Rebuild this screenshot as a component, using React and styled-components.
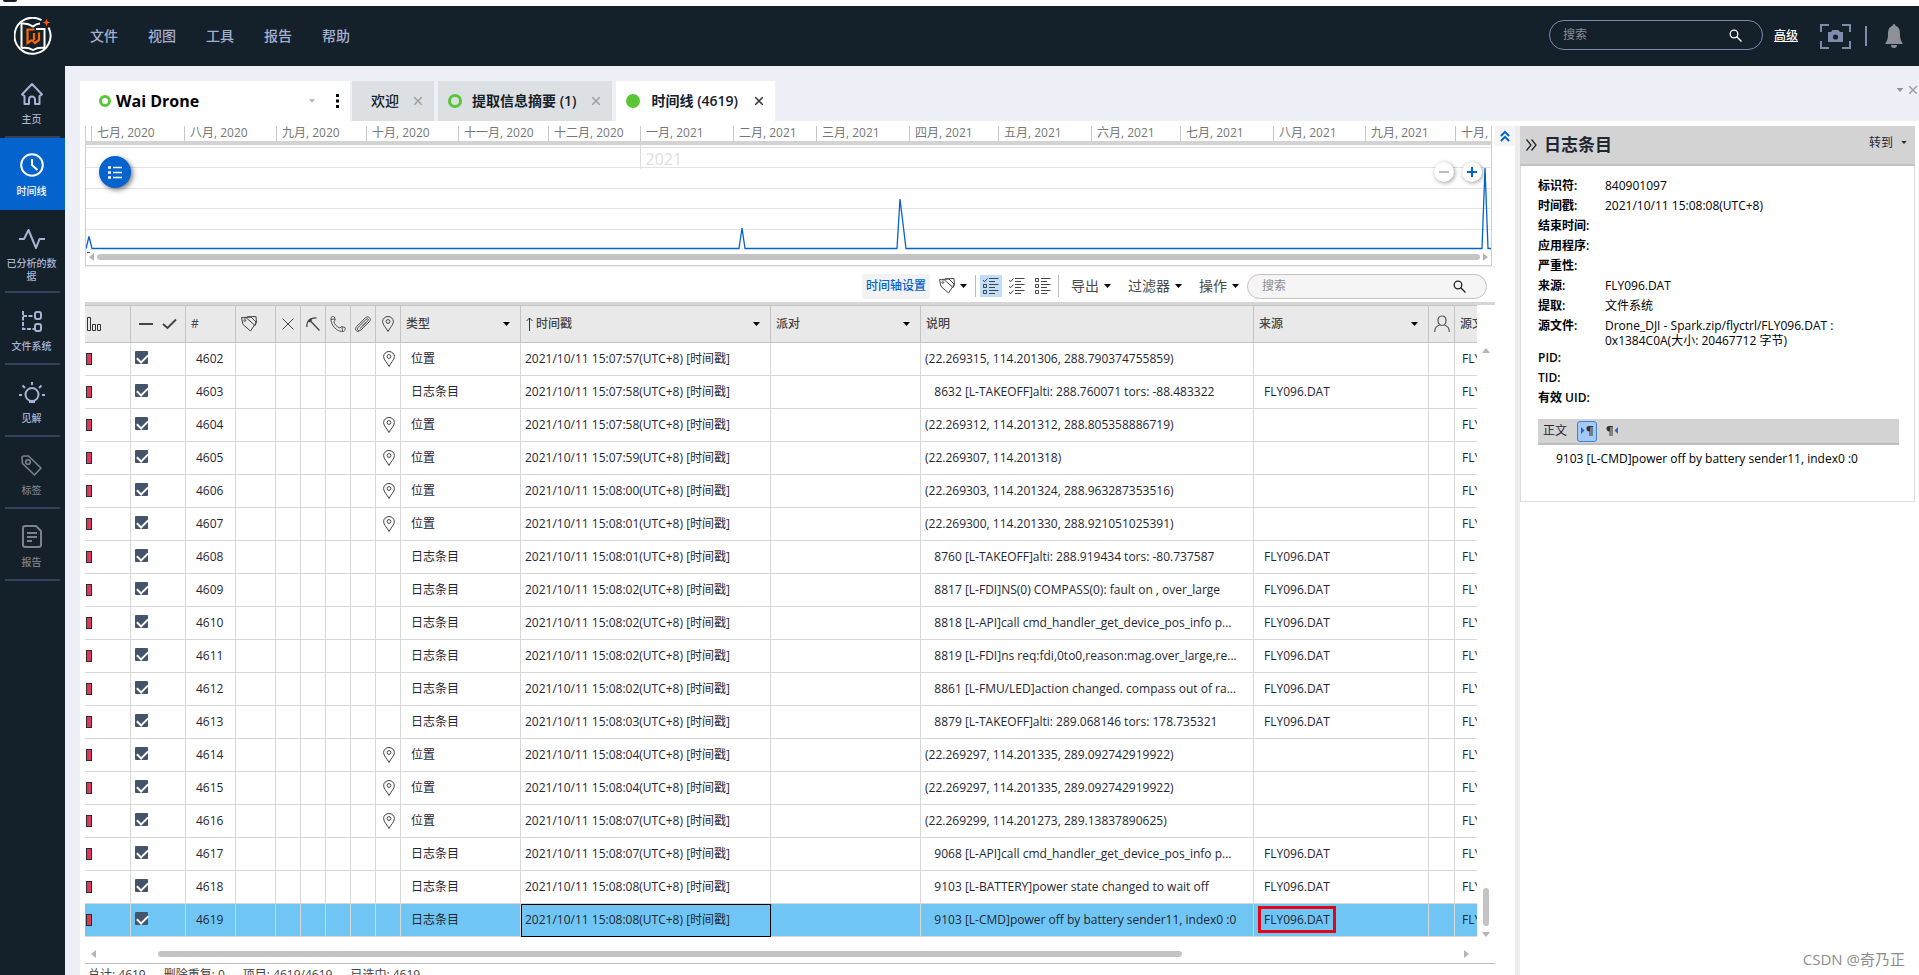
import React from 'react'
import styled, { createGlobalStyle } from 'styled-components'

const GlobalStyle = createGlobalStyle`
    * {
        box-sizing: border-box;
    }
    body {
        margin: 0;
        overflow: hidden;
        background: white;
        color: #1f2733;
        font-family: 'Open Sans', 'Noto Sans CJK SC', sans-serif;
        font-size: 12px;
        line-height: 16px;
    }
    button, input {
        font: inherit;
        color: inherit;
    }
    button {
        padding: 0;
        border: 0;
        background: none;
    }
    svg {
        display: block;
        flex: none;
    }
`

const Shell = styled.div`
    position: relative;
    display: flex;
    flex-direction: column;
    height: 100vh;
    overflow: hidden;
`

const TitleStrip = styled.div`
    flex: none;
    height: 6px;
    padding-left: 3px;
`

const TitleMark = styled.div`
    width: 14px;
    height: 2px;
    border-radius: 0 0 4px 4px;
    background: #14202a;
`

const Header = styled.header`
    flex: none;
    display: flex;
    align-items: center;
    height: 60px;
    padding: 0 16px 0 14px;
    background: #14202a;
    color: #a4aed0;
`

const Menu = styled.nav`
    display: flex;
    flex: 1;
    gap: 30px;
    margin-left: 38px;
`

const MenuItem = styled.button`
    font-size: 14px;
    font-weight: 500;
`

const GlobalSearch = styled.label`
    display: flex;
    align-items: center;
    width: 214px;
    height: 30px;
    margin-top: -2px;
    padding: 0 20px 0 13px;
    border: 1px solid #7f8bad;
    border-radius: 15px;
    color: white;
`

const SearchInput = styled.input`
    flex: 1;
    min-width: 0;
    border: 0;
    outline: 0;
    padding: 0;
    background: none;
    &::placeholder {
        color: #8a8d92;
        opacity: 1;
    }
`

const AdvancedLink = styled.a`
    margin: 0 22px 0 11px;
    color: white;
    font-weight: 500;
    text-decoration: underline;
`

const HeaderDivider = styled.div`
    width: 2px;
    height: 20px;
    margin: 0 18px 0 14px;
    background: #7f8bad;
`

const Body = styled.div`
    display: flex;
    flex: 1;
    min-height: 0;
`

const Sidebar = styled.nav`
    flex: none;
    width: 65px;
    background: #14202a;
`

const SideItem = styled.button`
    display: flex;
    flex-direction: column;
    align-items: center;
    justify-content: flex-end;
    gap: 8px;
    width: 100%;
    height: ${p => (p.$tall ? 83 : 72)}px;
    padding: 0 6px ${p => (p.$tall ? 10 : 12)}px 4px;
    background: ${p => (p.$active ? '#0563ce' : 'linear-gradient(#31415f, #31415f) 5px 100% / 55px 2px no-repeat')};
    color: ${p => (p.$active ? 'white' : p.$dim ? '#7b818d' : '#a9b2d3')};
    font-size: 10px;
    font-weight: 500;
    line-height: 13px;
`

const Main = styled.main`
    display: flex;
    flex-direction: column;
    flex: 1;
    min-width: 0;
    padding: 15px 0 0 15px;
    background: #edf0f6;
`

const Tabs = styled.div`
    display: flex;
    flex: none;
    height: 40px;
`

const ProjectTab = styled.div`
    display: flex;
    align-items: center;
    width: 270px;
    margin-right: 2px;
    padding: 0 10px 0 19px;
    background: white;
    color: black;
    font-size: 16px;
    font-weight: 700;
`

const ProjectName = styled.span`
    flex: 1;
    margin-left: 5px;
`

const Tab = styled.div`
    display: flex;
    align-items: center;
    gap: ${p => (p.$active ? 12 : 10)}px;
    height: 40px;
    margin-right: 4px;
    padding: 0 12px 0 ${p => (p.$plain ? 19 : 10)}px;
    background: ${p => (p.$active ? 'white' : '#dde0e3')};
    color: #14202a;
    font-size: 14px;
    font-weight: ${p => (p.$plain ? 500 : 600)};
`

const TabTitle = styled.span`
    margin-right: 5px;
`

const Dot = styled.span`
    width: ${p => p.$size}px;
    height: ${p => p.$size}px;
    border: 3px solid #5bc538;
    border-radius: 50%;
    background: ${p => (p.$full ? '#5bc538' : 'none')};
`

const CloseButton = styled.button`
    color: ${p => (p.$active ? '#333333' : '#9b9fa3')};
`

const TabTools = styled.div`
    display: flex;
    align-items: center;
    gap: 5px;
    height: 18px;
    margin-left: auto;
    padding-right: 2px;
    color: #909499;
`

const Workspace = styled.div`
    display: flex;
    flex: 1;
    min-height: 0;
    padding: 5px 4px 0 5px;
    background: white;
`

const Evidence = styled.section`
    display: flex;
    flex-direction: column;
    flex: 1;
    min-width: 0;
`

const TimelineRow = styled.div`
    display: flex;
    height: 145px;
    border-bottom: 1px solid #ececec;
`

const Timeline = styled.div`
    display: flex;
    flex-direction: column;
    flex: 1;
    min-width: 0;
    height: 140px;
    margin-right: 3px;
    border: 1px solid #d0d0d0;
    border-top: 0;
`

const Ruler = styled.div`
    display: grid;
    grid-template-columns: ${p => p.$days.map(d => `minmax(0, ${d}fr)`).join(' ')};
    height: 19px;
    padding-left: 5px;
    border-bottom: 4px solid #d3d3d3;
`

const Month = styled.div`
    padding-left: 5px;
    border-left: 1px solid #c8c8c8;
    color: #777777;
    line-height: 14px;
    white-space: nowrap;
`

const ChartArea = styled.div`
    position: relative;
    height: 108px;
`

const YearLabel = styled.span`
    position: absolute;
    top: 0;
    left: 39.4%;
    height: 24px;
    padding: 6px 5px 0;
    border-left: 1px solid #dddddd;
    color: #dedede;
    font-size: 16px;
`

const LegendButton = styled.button`
    position: absolute;
    top: 11px;
    left: 13px;
    display: flex;
    align-items: center;
    justify-content: center;
    width: 32px;
    height: 32px;
    border-radius: 50%;
    background: #0563ce;
    color: white;
    box-shadow: 2px 2px 5px rgba(0, 0, 0, 0.5);
`

const ZoomButtons = styled.div`
    position: absolute;
    top: 17px;
    right: 9px;
    display: flex;
    gap: 8px;
`

const ZoomButton = styled.button`
    display: flex;
    align-items: center;
    justify-content: center;
    width: 20px;
    height: 20px;
    border-radius: 50%;
    background: white;
    color: ${p => (p.$off ? '#b9bec4' : '#0563ce')};
    box-shadow: 1px 1px 4px rgba(0, 0, 0, 0.4);
`

const ScrollTrack = styled.div`
    display: flex;
    align-items: center;
    gap: 3px;
    height: 8px;
    padding: 0 3px;
    color: #b5b5b5;
`

const ScrollThumb = styled.div`
    flex: 1;
    height: 6px;
    border-radius: 3px;
    background: #c4c4c4;
`

const CollapseButton = styled.button`
    display: flex;
    align-items: center;
    justify-content: center;
    width: 20px;
    height: 20px;
    margin-right: -20px;
    background: #f4f4f4;
    color: #0563ce;
`

const Toolbar = styled.div`
    display: flex;
    flex: none;
    align-items: center;
    justify-content: flex-end;
    height: 35px;
    padding: 3px 8px 0 0;
    color: #4b4b4b;
`

const SettingsButton = styled.button`
    height: 25px;
    margin-right: 9px;
    padding: 0 4px;
    border-radius: 3px;
    background: #f3f3f3;
    color: #0563ce;
    font-weight: 500;
`

const ToolDivider = styled.div`
    width: 1px;
    height: 22px;
    margin-right: ${p => p.$after}px;
    background: #b8bcc2;
`

const ModeButton = styled.button`
    display: flex;
    align-items: center;
    justify-content: center;
    width: 22px;
    height: 22px;
    margin-right: 4px;
    background: ${p => (p.$active ? '#bfdefb' : 'none')};
`

const ToolMenu = styled.button`
    display: flex;
    align-items: center;
    gap: 5px;
    margin-right: ${p => p.$after || 17}px;
    font-size: 14px;
    color: #4b4b4b;
`

const TableSearch = styled.label`
    display: flex;
    align-items: center;
    width: 240px;
    height: 25px;
    padding: 0 20px 0 14px;
    border: 1px solid #c3c3c3;
    border-radius: 13px;
    background: #f5f5f5;
    color: #222222;
`

const TableArea = styled.div`
    display: flex;
    flex: none;
    border-top: 3px solid #d6d6d6;
`

const TableClip = styled.div`
    flex: 1;
    min-width: 0;
    overflow: hidden;
`

const Table = styled.table`
    width: 100%;
    table-layout: fixed;
    border-collapse: separate;
    border-spacing: 0;
`

const Th = styled.th`
    height: 38px;
    padding: 0 ${p => (p.$pad === undefined ? 5 : p.$pad)}px;
    overflow: hidden;
    border: 0 solid #c3c3c3;
    border-width: 1px ${p => (p.$last ? 0 : 1)}px 1px 0;
    background: #e9e9e9;
    color: #444444;
    font-weight: 500;
    text-align: left;
    white-space: nowrap;
`

const ThInner = styled.div`
    display: flex;
    align-items: center;
    gap: 3px;
    justify-content: ${p => (p.$center ? 'center' : 'flex-start')};
`

const SortButton = styled.button`
    margin-left: auto;
    margin-right: 5px;
    color: black;
`

const Row = styled.tr`
    background: ${p => (p.$selected ? '#6fc6f5' : 'white')};
`

const Td = styled.td`
    height: 33px;
    padding: 0 0 0 ${p => (p.$pad === undefined ? 10 : p.$pad)}px;
    overflow: hidden;
    border: 0 solid #d8d8d8;
    border-width: 0 ${p => (p.$last ? 0 : 1)}px 1px 0;
    outline: ${p => (p.$focus ? '1px solid black' : 'none')};
    outline-offset: -1px;
    white-space: pre;
`

const ScoreBar = styled.div`
    width: 6px;
    height: 12px;
    border: 1px solid #2b2b35;
    background: #dc3a56;
`

const Check = styled.input`
    position: relative;
    display: block;
    appearance: none;
    width: 13px;
    height: 13px;
    margin: 0 0 3px;
    border-radius: 1px;
    background: #44546a;
    &:checked::after {
        content: '';
        position: absolute;
        top: 3px;
        left: 2px;
        width: 9px;
        height: 5px;
        border: solid white;
        border-width: 0 0 2px 2px;
        transform: rotate(-45deg);
    }
`

const Marked = styled.span`
    padding: 2px 3px;
    margin-left: -6px;
    border: 3px solid #e30613;
`

const VScroll = styled.div`
    display: flex;
    flex-direction: column;
    align-items: center;
    width: 18px;
    padding: 43px 0 0;
    color: #b5b5b5;
`

const VThumb = styled.div`
    width: 6px;
    height: 38px;
    margin: auto 0 6px;
    border-radius: 3px;
    background: #c4c4c4;
`

const BottomScroll = styled.div`
    display: flex;
    flex: none;
    align-items: center;
    height: 27px;
    padding: 8px 26px 0 6px;
    border-bottom: 1px solid #bdbdbd;
    color: #b5b5b5;
`

const BottomTrack = styled.div`
    display: flex;
    flex: 1;
    padding: 0 282px 0 62px;
`

const StatusBar = styled.footer`
    display: flex;
    flex: none;
    gap: 18px;
    height: 24px;
    padding: 3px 3px 0;
    color: #444444;
    white-space: nowrap;
`

const Splitter = styled.div`
    width: 5px;
    margin-left: 20px;
    background: #ededed;
`

const Details = styled.aside`
    flex: none;
    width: 395px;
    color: black;
`

const DetailsHeader = styled.div`
    display: flex;
    align-items: center;
    gap: 7px;
    height: 40px;
    padding: 0 8px 0 6px;
    border-bottom: 2px solid #c0c0c0;
    background: #d3d3d3;
    color: #1f2733;
`

const DetailsTitle = styled.h2`
    flex: 1;
    margin: 0;
    font-size: 17px;
    font-weight: 600;
`

const GoTo = styled.button`
    display: flex;
    align-items: center;
    gap: 8px;
    margin-bottom: 5px;
`

const DetailsBody = styled.div`
    height: 336px;
    padding: 10px 15px 0 17px;
    border: 1px solid #dcdcdc;
    border-top: 0;
`

const Fields = styled.dl`
    display: grid;
    grid-template-columns: 67px 1fr;
    margin: 0 0 11px;
`

const FieldName = styled.dt`
    font-weight: 600;
    line-height: 20px;
    white-space: nowrap;
`

const FieldValue = styled.dd`
    margin: 0;
    padding: 2px 40px 0 0;
    line-height: 15px;
`

const TextBar = styled.div`
    display: flex;
    align-items: center;
    gap: 5px;
    height: 26px;
    padding-left: 5px;
    border-bottom: 2px solid #bdbdbd;
    background: #d3d3d3;
    color: #1f2733;
`

const DirectionButton = styled.button`
    display: flex;
    align-items: center;
    justify-content: center;
    width: 20px;
    height: 21px;
    margin-left: ${p => (p.$active ? 5 : 0)}px;
    border: 1px solid ${p => (p.$active ? '#3f82d2' : 'transparent')};
    border-radius: 3px;
    background: ${p => (p.$active ? '#a5c9f5' : 'none')};
`

const TextBody = styled.p`
    margin: 6px 0 0 18px;
    white-space: nowrap;
`

const Watermark = styled.span`
    position: absolute;
    right: 14px;
    bottom: 6px;
    color: #8d8d8d;
    font-size: 15px;
    line-height: 20px;
`

const Logo = () => (
    <svg width="38" height="38" viewBox="0 0 38 38" fill="none">
        <path d="M27.500 3.200A18 18 0 1 0 34.500 10.500" stroke="white" strokeWidth="2" />
        <path d="M7.500 31V6.500c4.500-.5 8 .5 11.500 3 2.200-2 4.200-2.800 7-3M22 12h8.500v19M7.500 31c5-1 8 0 11.500 2 3.500-2 6.500-3 11.500-2" stroke="white" strokeWidth="2" />
        <path d="M20.500 12.500h-7V26l3.500-2.500h1.500L21 26l4-3v-7.500M20 16v7" stroke="#ff6a00" strokeWidth="2.200" />
        <path d="M32.500 1.500l1 3 3 1-3 1-1 3-1-3-3-1 3-1z" fill="#ff5a10" />
    </svg>
)

const SearchIcon = () => (
    <svg width="13" height="13" viewBox="0 0 13 13" fill="none" stroke="currentColor" strokeWidth="1.300">
        <circle cx="5" cy="5" r="3.800" />
        <path d="M7.800 7.800l4.700 4.700" />
    </svg>
)

const CameraIcon = () => (
    <svg width="31" height="25" viewBox="0 0 31 25" fill="none" stroke="#7f8bad" strokeWidth="2">
        <path d="M1 8V1h8M22 1h8v7M30 17v7h-8M9 24H1v-7" />
        <path d="M8 8h3l1.500-2h6L20 8h3v10H8z" fill="#7f8bad" stroke="none" />
        <circle cx="15.500" cy="13" r="2.600" fill="#14202a" stroke="none" />
    </svg>
)

const BellIcon = () => (
    <svg width="18" height="24" viewBox="0 0 18 24" fill="#8d9197">
        <path d="M9 0c1 0 1.400.8 1.400 1.800C14 3 15 6 15 10c0 5 1 7 3 10H0c2-3 3-5 3-10 0-4 1-7 4.600-8.200C7.600.8 8 0 9 0zM6 21h6c0 2-1 3-3 3s-3-1-3-3z" />
    </svg>
)

const Caret = ({ w = 7, h = 4, color = 'currentColor' }) => (
    <svg width={w} height={h} viewBox="0 0 7 4" fill={color}>
        <path d="M0 0h7L3.500 4z" />
    </svg>
)

const Arrow = ({ left, up, down }) => (
    <svg width={up || down ? 8 : 5} height={up || down ? 5 : 8} viewBox={up || down ? '0 0 8 5' : '0 0 5 8'} fill="currentColor">
        <path d={up ? 'M0 5L4 0l4 5z' : down ? 'M0 0l4 5 4-5z' : left ? 'M5 0v8L0 4z' : 'M0 0v8l5-4z'} />
    </svg>
)

const CloseIcon = () => (
    <svg width="8" height="8" viewBox="0 0 8 8" stroke="currentColor" strokeWidth="1.500">
        <path d="M0 0l8 8M8 0L0 8" />
    </svg>
)

const HomeIcon = () => (
    <svg width="22" height="22" viewBox="0 0 22 22" fill="none" stroke="currentColor" strokeWidth="2" strokeLinejoin="round">
        <path d="M1 11.500L11 1l10 10.500-2.500 1.500V21H14v-4.500a3 3 0 0 0-6 0V21H3.500v-8z" />
    </svg>
)

const ClockIcon = () => (
    <svg width="24" height="24" viewBox="0 0 24 24" fill="none" stroke="currentColor" strokeWidth="2">
        <circle cx="12" cy="12" r="10.800" />
        <path d="M12 6v6l5.500 5" />
    </svg>
)

const PulseIcon = () => (
    <svg width="26" height="20" viewBox="0 0 26 20" fill="none" stroke="currentColor" strokeWidth="2" strokeLinejoin="round">
        <path d="M0 10h5l4.500-9L17 19l3.500-9H26" />
    </svg>
)

const FilesIcon = () => (
    <svg width="20" height="22" viewBox="0 0 20 22" fill="none" stroke="currentColor" strokeWidth="2">
        <path d="M1 1v18h11M1 6h11" strokeDasharray="4 1.500" />
        <rect x="13" y="2" width="6" height="7" rx="2" />
        <rect x="13" y="14" width="6" height="7" rx="2" />
    </svg>
)

const BulbIcon = () => (
    <svg width="26" height="22" viewBox="0 0 26 22" fill="none" stroke="currentColor" strokeWidth="2">
        <circle cx="13" cy="12.500" r="6.500" />
        <path d="M10 20h6M0 13h3M23 13h3M3.500 3.500l2.500 2.500M22.500 3.500L20 6M13 0v3" />
    </svg>
)

const TagIcon = () => (
    <svg width="21" height="21" viewBox="0 0 21 21" fill="none" stroke="currentColor" strokeWidth="1.600" strokeLinejoin="round">
        <path d="M1 3a2 2 0 0 1 2-2h4.500L20 13l-6.500 7L1.500 8.500z" />
        <circle cx="7" cy="7" r="2.300" />
    </svg>
)

const ReportIcon = () => (
    <svg width="20" height="23" viewBox="0 0 20 23" fill="none" stroke="currentColor" strokeWidth="2" strokeLinejoin="round">
        <path d="M3 1h11l5 5v14a2 2 0 0 1-2 2H3a2 2 0 0 1-2-2V3a2 2 0 0 1 2-2z" />
        <path d="M5 8h10M5 12h10M5 16h5" />
    </svg>
)

const TagsIcon = () => (
    <svg width="16" height="16" viewBox="0 0 16 16" fill="none" stroke="currentColor" strokeWidth="1" strokeLinejoin="round">
        <path d="M.5 1.500l5 .5 8 7-4 6L2 8.500zM3 1.500L10 1l5 5-1.500 4M6 .8l9-.3.500 6-1.500 3" />
        <circle cx="3.800" cy="4.500" r=".9" />
    </svg>
)

const PinIcon = () => (
    <svg width="12" height="16" viewBox="0 0 12 16" fill="none" stroke="#444444">
        <path d="M6 15.500C4.500 12 .6 9 .6 5.600a5.400 5.100 0 0 1 10.800 0C11.400 9 7.500 12 6 15.500z" />
        <circle cx="6" cy="5.500" r="1.900" />
    </svg>
)

const BarsIcon = () => (
    <svg width="15" height="15" viewBox="0 0 15 15" fill="none" stroke="#333333">
        <path d="M.5.5h3v13h-3zM5.500 7.500h3v6h-3zM10.500 7.500h3v6h-3z" />
    </svg>
)

const CheckToggleIcon = () => (
    <svg width="38" height="12" viewBox="0 0 38 12" fill="none" stroke="#444444" strokeWidth="2">
        <path d="M0 6h14M24 6l4.500 4L37 1.500" />
    </svg>
)

const CrossIcon = () => (
    <svg width="12" height="12" viewBox="0 0 12 12" stroke="#444444">
        <path d="M.5.500l11 11M11.500.5l-11 11" />
    </svg>
)

const PickIcon = () => (
    <svg width="14" height="14" viewBox="0 0 14 14" fill="none" stroke="#444444" strokeWidth="1.300">
        <path d="M4 3.500L13.500 13.500M1 10C.5 7 1.500 4.500 3.500 3S8 .8 10.500 1" />
        <path d="M2.500 4.500l3-2.500" strokeWidth="2.500" />
    </svg>
)

const PhoneIcon = () => (
    <svg width="16" height="16" viewBox="0 0 16 16" fill="none" stroke="#555555" strokeLinejoin="round">
        <path d="M1 1.500C2 .5 3.500.2 4.500 1l.8 3.200L3.800 5.500c.8 3 3 5.500 6.200 6.500l1.500-1.500 3.500 1c.6 1.500 0 3-1.300 4C7 16.500-.2 8.500 1 1.500zM1 3.500l4-.5M12.500 15.500l-.5-5" />
    </svg>
)

const ClipIcon = () => (
    <svg width="16" height="16" viewBox="0 0 16 16" fill="none" stroke="#4a4a4a" strokeLinecap="round">
        <path d="M5 12.500L13 4.500c1-1.200-.5-2.500-1.600-1.400L3 11.500c-1.800 2 .8 4.500 2.800 2.600L14.500 5.500c2.400-2.600-1.400-6.300-4-3.800L1.700 10.400c-2.500 2.800-.5 5.600 2 4.900M7.500 10l3.500-3.500" />
    </svg>
)

const PersonIcon = () => (
    <svg width="16" height="18" viewBox="0 0 16 18" fill="none" stroke="#555555" strokeWidth="1.200">
        <path d="M8 1c3 0 4 2 4 4.500S10.500 10.500 8 10.500 4 8 4 5.500 5 1 8 1z" />
        <path d="M.6 17c0-4 2-6 5-7M15.400 17c0-4-2-6-5-7" />
    </svg>
)

const ListIcon = () => (
    <svg width="14" height="13" viewBox="0 0 14 13" stroke="currentColor">
        <path d="M0 1.500h3M0 6.500h3M0 11.500h3" strokeWidth="2.400" />
        <path d="M5 1.500h9M5 6.500h9M5 11.500h9" strokeWidth="1.300" />
    </svg>
)

const ticks = ['M0 2l1.500 1.800L4.500.500', 'M0 8l1.500 1.800L4.500 6.500', 'M0 14l1.500 1.800L4.500 12.500']
const boxes = ['M.5.500h3v3h-3z', 'M.5 6.500h3v3h-3z', 'M.5 12.500h3v3h-3z']

const ModeIcon = ({ ticked }) => (
    <svg width="16" height="17" viewBox="0 0 16 17" fill="none" stroke="#444444">
        {[0, 1, 2].map(i => <path key={i} d={i < ticked ? ticks[i] : boxes[i]} />)}
        <path d="M6 .5h9.500M6 3.500h6M6 6.500h9.500M6 9.500h6M6 12.500h9.500M6 15.500h6" />
    </svg>
)

const DoubleChevron = ({ up }) => (
    <svg width={up ? 10 : 11} height="12" viewBox="0 0 11 12" fill="none" stroke="currentColor" strokeWidth={up ? 2.2 : 1.3}>
        <path d={up ? 'M1 6l4.500-4.500L10 6M1 11.500L5.500 7l4.500 4.500' : 'M.5.500L5 6l-4.500 5.500M5.500.500L10 6l-4.500 5.500'} />
    </svg>
)

const Pilcrow = ({ flip }) => (
    <svg width="12" height="10" viewBox="0 0 12 10">
        <path d={flip ? 'M12 1v7L8.500 4.500z' : 'M0 1v7l3.500-3.500z'} fill="#2f62c4" />
        <path d={flip ? 'M7 0v1H6.500v9h-1V1h-1v9h-1V5.500C-.5 5.500-.5 0 3 0z' : 'M12 0v1h-.5v9h-1V1h-1v9h-1V5.500C4.500 5.500 4.500 0 8 0z'} fill="#333333" />
    </svg>
)

const months = [
    ['七月, 2020', 93], ['八月, 2020', 92], ['九月, 2020', 90], ['十月, 2020', 92],
    ['十一月, 2020', 90], ['十二月, 2020', 92], ['一月, 2021', 93], ['二月, 2021', 83],
    ['三月, 2021', 93], ['四月, 2021', 89], ['五月, 2021', 93], ['六月, 2021', 89],
    ['七月, 2021', 93], ['八月, 2021', 92], ['九月, 2021', 90], ['十月,', 36],
]

const sideItems = [
    { name: '主页', icon: <HomeIcon /> },
    { name: '时间线', icon: <ClockIcon />, active: true },
    { name: '已分析的数据', icon: <PulseIcon />, tall: true },
    { name: '文件系统', icon: <FilesIcon /> },
    { name: '见解', icon: <BulbIcon /> },
    { name: '标签', icon: <TagIcon />, dim: true },
    { name: '报告', icon: <ReportIcon />, dim: true },
]

const place = (id, time, text) => ({ id, time, text, isPlace: true })
const log = (id, time, text) => ({ id, time, text: '   ' + text })

const rows = [
    place(4602, '15:07:57', '(22.269315, 114.201306, 288.790374755859)'),
    log(4603, '15:07:58', '8632 [L-TAKEOFF]alti: 288.760071 tors: -88.483322'),
    place(4604, '15:07:58', '(22.269312, 114.201312, 288.805358886719)'),
    place(4605, '15:07:59', '(22.269307, 114.201318)'),
    place(4606, '15:08:00', '(22.269303, 114.201324, 288.963287353516)'),
    place(4607, '15:08:01', '(22.269300, 114.201330, 288.921051025391)'),
    log(4608, '15:08:01', '8760 [L-TAKEOFF]alti: 288.919434 tors: -80.737587'),
    log(4609, '15:08:02', '8817 [L-FDI]NS(0) COMPASS(0): fault on , over_large'),
    log(4610, '15:08:02', '8818 [L-API]call cmd_handler_get_device_pos_info p...'),
    log(4611, '15:08:02', '8819 [L-FDI]ns req:fdi,0to0,reason:mag.over_large,re...'),
    log(4612, '15:08:02', '8861 [L-FMU/LED]action changed. compass out of ra...'),
    log(4613, '15:08:03', '8879 [L-TAKEOFF]alti: 289.068146 tors: 178.735321'),
    place(4614, '15:08:04', '(22.269297, 114.201335, 289.092742919922)'),
    place(4615, '15:08:04', '(22.269297, 114.201335, 289.092742919922)'),
    place(4616, '15:08:07', '(22.269299, 114.201273, 289.13837890625)'),
    log(4617, '15:08:07', '9068 [L-API]call cmd_handler_get_device_pos_info p...'),
    log(4618, '15:08:08', '9103 [L-BATTERY]power state changed to wait off'),
    log(4619, '15:08:08', '9103 [L-CMD]power off by battery sender11, index0 :0'),
]

const columnWidths = [46, 55, 50, 40, 25, 25, 25, 25, 25, 120, 250, 150, null, 175, 26, 22]

const iconColumns = [
    ['删除', <CrossIcon />], ['挖掘', <PickIcon />], ['通话', <PhoneIcon />],
    ['附件', <ClipIcon />], ['位置', <PinIcon />],
]

const fields = [
    ['标识符:', '840901097'],
    ['时间戳:', '2021/10/11 15:08:08(UTC+8)'],
    ['结束时间:', ''],
    ['应用程序:', ''],
    ['严重性:', ''],
    ['来源:', 'FLY096.DAT'],
    ['提取:', '文件系统'],
    ['源文件:', 'Drone_DJI - Spark.zip/flyctrl/FLY096.DAT : 0x1384C0A(大小: 20467712 字节)'],
    ['PID:', ''],
    ['TID:', ''],
    ['有效 UID:', ''],
]

const Chart = () => (
    <svg width="100%" height="108" viewBox="0 0 1405 108" preserveAspectRatio="none" fill="none">
        <path d="M0 2.500h1405M0 22.500h1405M0 43.500h1405M0 63.500h1405M0 84.500h1405" stroke="#e2e2e2" />
        <path d="M0 103.500L3 91.500L6 103.500H653L656 83L659 103.500H811L814 54L820 103.500H1396L1399 23L1402 103.500H1405" stroke="#0563ce" strokeWidth="1.300" />
        <path d="M1 107.500h3" stroke="#0563ce" />
    </svg>
)

const HeadCell = ({ title, sort, asc, last }) => (
    <Th $last={last}>
        <ThInner>
            {asc && (
                <svg width="7" height="14" viewBox="0 0 7 14" fill="none" stroke="#333333">
                    <path d="M3.500 14V1M.5 4l3-3 3 3" />
                </svg>
            )}
            <span>{title}</span>
            {sort && <SortButton aria-label={title}><Caret /></SortButton>}
        </ThInner>
    </Th>
)

const EventRow = ({ row, selected }) => (
    <Row $selected={selected}>
        <Td $pad={1}><ScoreBar /></Td>
        <Td $pad={4}><Check type="checkbox" defaultChecked aria-label={String(row.id)} /></Td>
        <Td>{row.id}</Td>
        <Td />
        <Td />
        <Td />
        <Td />
        <Td />
        <Td $pad={7}>{row.isPlace && <PinIcon />}</Td>
        <Td>{row.isPlace ? '位置' : '日志条目'}</Td>
        <Td $pad={4} $focus={selected}>2021/10/11 {row.time}(UTC+8) [时间戳]</Td>
        <Td />
        <Td $pad={4}>{row.text}</Td>
        <Td>{!row.isPlace && (selected ? <Marked>FLY096.DAT</Marked> : 'FLY096.DAT')}</Td>
        <Td />
        <Td $pad={7} $last>FLY</Td>
    </Row>
)

const EventTable = () => (
    <TableArea>
        <TableClip>
            <Table>
                <colgroup>
                    {columnWidths.map((w, i) => <col key={i} width={w || undefined} />)}
                </colgroup>
                <thead>
                    <tr>
                        <Th $pad={2} aria-label="评分"><ThInner><BarsIcon /></ThInner></Th>
                        <Th aria-label="选择"><ThInner $center><CheckToggleIcon /></ThInner></Th>
                        <HeadCell title="#" />
                        <Th aria-label="标记"><ThInner><TagsIcon /></ThInner></Th>
                        {iconColumns.map(([name, icon]) => (
                            <Th key={name} $pad={0} aria-label={name}><ThInner $center>{icon}</ThInner></Th>
                        ))}
                        <HeadCell title="类型" sort />
                        <HeadCell title="时间戳" sort asc />
                        <HeadCell title="派对" sort />
                        <HeadCell title="说明" />
                        <HeadCell title="来源" sort />
                        <Th $pad={0} aria-label="用户"><ThInner $center><PersonIcon /></ThInner></Th>
                        <HeadCell title="源文件" last />
                    </tr>
                </thead>
                <tbody>
                    {rows.map(row => <EventRow key={row.id} row={row} selected={row.id === 4619} />)}
                </tbody>
            </Table>
        </TableClip>
        <VScroll>
            <Arrow up />
            <VThumb />
            <Arrow down />
        </VScroll>
    </TableArea>
)

const TimelinePanel = () => (
    <TimelineRow>
        <Timeline>
            <Ruler $days={months.map(m => m[1])}>
                {months.map(([name]) => <Month key={name}>{name}</Month>)}
            </Ruler>
            <ChartArea>
                <Chart />
                <YearLabel>2021</YearLabel>
                <LegendButton aria-label="图例"><ListIcon /></LegendButton>
                <ZoomButtons>
                    <ZoomButton $off aria-label="缩小">
                        <svg width="10" height="10" stroke="currentColor" strokeWidth="2"><path d="M0 5h10" /></svg>
                    </ZoomButton>
                    <ZoomButton aria-label="放大">
                        <svg width="10" height="10" stroke="currentColor" strokeWidth="2"><path d="M0 5h10M5 0v10" /></svg>
                    </ZoomButton>
                </ZoomButtons>
            </ChartArea>
            <ScrollTrack>
                <Arrow left />
                <ScrollThumb />
                <Arrow />
            </ScrollTrack>
        </Timeline>
        <CollapseButton aria-label="收起"><DoubleChevron up /></CollapseButton>
    </TimelineRow>
)

const EventToolbar = () => (
    <Toolbar>
        <SettingsButton>时间轴设置</SettingsButton>
        <ToolMenu $after={8} aria-label="标记"><TagsIcon /><Caret color="black" /></ToolMenu>
        <ToolDivider $after={4} />
        <ModeButton $active aria-label="全部"><ModeIcon ticked={1} /></ModeButton>
        <ModeButton aria-label="已选"><ModeIcon ticked={3} /></ModeButton>
        <ModeButton aria-label="未选"><ModeIcon ticked={0} /></ModeButton>
        <ToolDivider $after={12} />
        <ToolMenu>导出 <Caret color="black" /></ToolMenu>
        <ToolMenu>过滤器 <Caret color="black" /></ToolMenu>
        <ToolMenu $after={8}>操作 <Caret color="black" /></ToolMenu>
        <TableSearch>
            <SearchInput placeholder="搜索" aria-label="搜索" />
            <SearchIcon />
        </TableSearch>
    </Toolbar>
)

const DetailsPanel = () => (
    <Details>
        <DetailsHeader>
            <DoubleChevron />
            <DetailsTitle>日志条目</DetailsTitle>
            <GoTo>转到 <Caret w={6} h={3} /></GoTo>
        </DetailsHeader>
        <DetailsBody>
            <Fields>
                {fields.map(([name, value]) => (
                    <React.Fragment key={name}>
                        <FieldName>{name}</FieldName>
                        <FieldValue>{value}</FieldValue>
                    </React.Fragment>
                ))}
            </Fields>
            <TextBar>
                正文
                <DirectionButton $active aria-label="从左到右"><Pilcrow /></DirectionButton>
                <DirectionButton aria-label="从右到左"><Pilcrow flip /></DirectionButton>
            </TextBar>
            <TextBody>9103 [L-CMD]power off by battery sender11, index0 :0</TextBody>
        </DetailsBody>
    </Details>
)

export default function App() {
    return (
        <Shell>
            <GlobalStyle />
            <TitleStrip><TitleMark /></TitleStrip>
            <Header>
                <Logo />
                <Menu>
                    {['文件', '视图', '工具', '报告', '帮助'].map(m => <MenuItem key={m}>{m}</MenuItem>)}
                </Menu>
                <GlobalSearch>
                    <SearchInput placeholder="搜索" aria-label="搜索" />
                    <SearchIcon />
                </GlobalSearch>
                <AdvancedLink href="#">高级</AdvancedLink>
                <CameraIcon />
                <HeaderDivider />
                <BellIcon />
            </Header>
            <Body>
                <Sidebar>
                    {sideItems.map(item => (
                        <SideItem key={item.name} $active={item.active} $dim={item.dim} $tall={item.tall}>
                            {item.icon}
                            {item.name}
                        </SideItem>
                    ))}
                </Sidebar>
                <Main>
                    <Tabs>
                        <ProjectTab>
                            <Dot $size={12} />
                            <ProjectName>Wai Drone</ProjectName>
                            <Caret w={6} h={4} color="#b5b5b5" />
                            <svg width="25" height="14" viewBox="0 0 25 14" fill="black">
                                <path d="M21 0h3v3h-3zM21 5.500h3v3h-3zM21 11h3v3h-3z" />
                            </svg>
                        </ProjectTab>
                        <Tab $plain>
                            <TabTitle>欢迎</TabTitle>
                            <CloseButton aria-label="关闭"><CloseIcon /></CloseButton>
                        </Tab>
                        <Tab>
                            <Dot $size={14} />
                            <TabTitle>提取信息摘要 (1)</TabTitle>
                            <CloseButton aria-label="关闭"><CloseIcon /></CloseButton>
                        </Tab>
                        <Tab $active>
                            <Dot $size={14} $full />
                            <TabTitle>时间线 (4619)</TabTitle>
                            <CloseButton $active aria-label="关闭"><CloseIcon /></CloseButton>
                        </Tab>
                        <TabTools>
                            <Caret w={8} h={4} />
                            <CloseButton aria-label="关闭"><CloseIcon /></CloseButton>
                        </TabTools>
                    </Tabs>
                    <Workspace>
                        <Evidence>
                            <TimelinePanel />
                            <EventToolbar />
                            <EventTable />
                            <BottomScroll>
                                <Arrow left />
                                <BottomTrack><ScrollThumb /></BottomTrack>
                                <Arrow />
                            </BottomScroll>
                            <StatusBar>
                                <span>总计: 4619</span>
                                <span>删除重复: 0</span>
                                <span>项目: 4619/4619</span>
                                <span>已选中: 4619</span>
                            </StatusBar>
                        </Evidence>
                        <Splitter />
                        <DetailsPanel />
                    </Workspace>
                </Main>
            </Body>
            <Watermark>CSDN @奇乃正</Watermark>
        </Shell>
    )
}
